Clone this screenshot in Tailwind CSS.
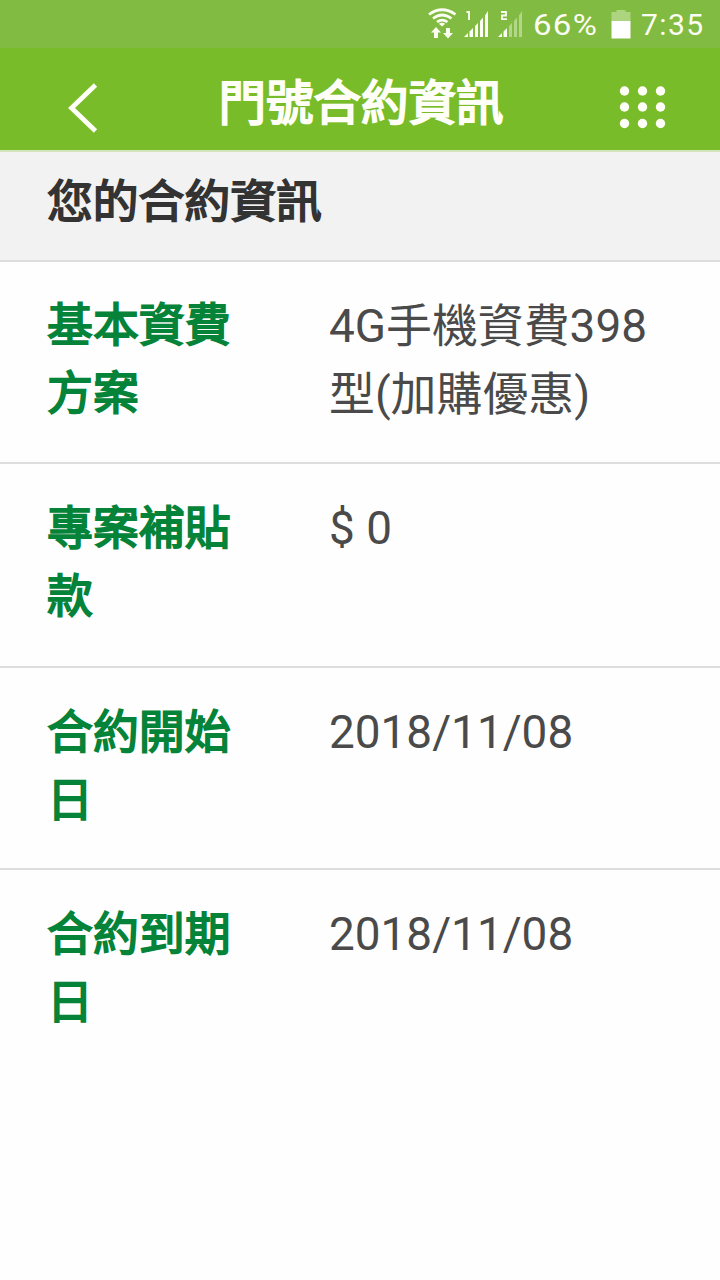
<!DOCTYPE html>
<html lang="zh-Hant">
<head>
<meta charset="utf-8">
<title>門號合約資訊</title>
<script src="https://cdn.jsdelivr.net/npm/@tailwindcss/browser@4"></script>
</head>
<body class="w-[720px] h-[1280px] overflow-hidden bg-[#fefefe] font-['Roboto','Noto_Sans_CJK_TC',sans-serif]">
<div class="h-[48px] bg-[#82bb41] flex items-start text-[#fbfdf3]">
  <svg class="w-[110px] h-[48px] ml-[420px] shrink-0" viewBox="420 0 110 48" fill="none" stroke="#fbfdf3">
    <path d="M429 14.5Q442 5 455.500 14.500M433 18.500Q442 11.500 451.500 18.500M437 22Q442 18.300 447.500 22" stroke-width="2.700"/>
    <path d="M442 26.500L438.800 23.800Q442 21.800 445.300 23.800Z" fill="#fbfdf3" stroke="none"/>
    <path d="M436 27L441 32.500H438V38H434V32.500H431ZM448 38.500L443 33H446V28H450V33H453Z" fill="#fbfdf3" stroke="none"/>
    <path d="M466.500 12H469V20" stroke-width="1.800"/>
    <path d="M464 37L468 33V37ZM469.500 37V31.500L473 28V37ZM475 37V26L478 23V37ZM480 37V21L483 17.500V37ZM485 37V15.500L488 11V37Z" fill="#fbfdf3" stroke="none"/>
    <path d="M501 12H506V15.500H502V19.200H507" stroke-width="1.800"/>
    <path d="M498 37L502 33V37ZM503.500 37V31.500L507 28V37Z" fill="#fbfdf3" stroke="none"/>
    <path d="M509 37V26L512 23V37ZM514 37V21L517 17.500V37ZM519 37V15.500L522 11V37Z" fill="#b3d68b" stroke="none"/>
  </svg>
  <span class="w-[76px] ml-[3px] mt-[6px] text-[30px] leading-[38px] tracking-[1.2px] whitespace-nowrap scale-x-110 origin-left">66%</span>
  <svg class="w-[20px] h-[48px] ml-[2px] shrink-0" viewBox="611 0 20 48">
    <path d="M611.500 21V12H616.500V10H625.500V12H630.500V21Z" fill="#add47f"/>
    <path d="M611.500 21H630.500V38.500H611.500Z" fill="#fff"/>
  </svg>
  <span class="ml-[10px] mt-[6px] text-[30px] leading-[38px] tracking-[1.4px] whitespace-nowrap">7:35</span>
</div>
<header class="h-[104px] bg-[#79bc29] border-b-2 border-[#d3e4bd] flex">
  <svg class="w-[150px] h-[102px] shrink-0" viewBox="0 48 150 102" fill="none" stroke="#fffff8" stroke-width="4.800"><path d="M95.500 85L71.500 108L95.500 131"/></svg>
  <h1 class="w-[420px] text-center text-[47.500px] leading-[68px] pt-[22px] pl-[2px] text-[#fffff8] [-webkit-text-stroke:2px_#fffff8]">門號合約資訊</h1>
  <svg class="w-[150px] h-[102px] shrink-0" viewBox="570 48 150 102" fill="#fffff8">
    <circle cx="624.500" cy="91" r="4.700"/><circle cx="642.500" cy="91" r="4.700"/><circle cx="660.500" cy="91" r="4.700"/>
    <circle cx="624.500" cy="107" r="4.700"/><circle cx="642.500" cy="107" r="4.700"/><circle cx="660.500" cy="107" r="4.700"/>
    <circle cx="624.500" cy="123.500" r="4.700"/><circle cx="642.500" cy="123.500" r="4.700"/><circle cx="660.500" cy="123.500" r="4.700"/>
  </svg>
</header>
<h2 class="h-[110px] bg-[#f2f2f2] border-b-2 border-[#dddddd] px-[47px] pt-[17px] text-[45.800px] leading-[68px] text-[#333] [-webkit-text-stroke:1.8px_#333]">您的合約資訊</h2>
<dl class="text-[45.900px] leading-[68px]">
  <div class="h-[202px] border-b-2 border-[#dddddd] pl-[47px] pt-[29px] flex">
    <dt class="w-[282px] text-[#048339] [-webkit-text-stroke:1.8px_#048339]">基本資費<br>方案</dt><dd class="pt-px text-[#4a4a4a]">4G手機資費398<br>型(加購優惠)</dd>
  </div>
  <div class="h-[204px] border-b-2 border-[#dddddd] pl-[47px] pt-[30px] flex">
    <dt class="w-[282px] text-[#048339] [-webkit-text-stroke:1.8px_#048339]">專案補貼<br>款</dt><dd class="text-[#4a4a4a]">$ 0</dd>
  </div>
  <div class="h-[202px] border-b-2 border-[#dddddd] pl-[47px] pt-[30px] flex">
    <dt class="w-[282px] text-[#048339] [-webkit-text-stroke:1.8px_#048339]">合約開始<br>日</dt><dd class="text-[#4a4a4a]">2018/11/08</dd>
  </div>
  <div class="h-[202px] pl-[47px] pt-[30px] flex">
    <dt class="w-[282px] text-[#048339] [-webkit-text-stroke:1.8px_#048339]">合約到期<br>日</dt><dd class="text-[#4a4a4a]">2018/11/08</dd>
  </div>
</dl>
</body>
</html>
